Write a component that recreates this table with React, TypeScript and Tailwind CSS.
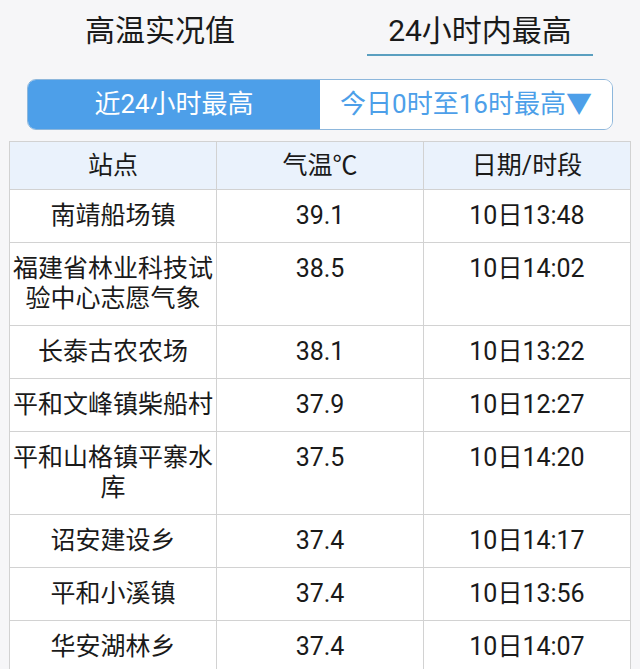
import React from "react";

const rows: [string, string, string][] = [
  ["南靖船场镇", "39.1", "10日13:48"],
  ["福建省林业科技试验中心志愿气象", "38.5", "10日14:02"],
  ["长泰古农农场", "38.1", "10日13:22"],
  ["平和文峰镇柴船村", "37.9", "10日12:27"],
  ["平和山格镇平寨水库", "37.5", "10日14:20"],
  ["诏安建设乡", "37.4", "10日14:17"],
  ["平和小溪镇", "37.4", "10日13:56"],
  ["华安湖林乡", "37.4", "10日14:07"],
];

export default function App() {
  return (
    <div
      className="h-[669px] w-[640px] overflow-hidden bg-[#f6f6f8] text-[#1a1a1a]"
      style={{ fontFamily: "Roboto, 'Noto Sans CJK SC', sans-serif" }}
    >
      <div className="flex h-[64px] items-start">
        <div className="flex w-1/2 justify-center pt-[11px]">
          <span className="text-[30px] leading-[40px]">高温实况值</span>
        </div>
        <div className="flex w-1/2 justify-center pt-[11px]">
          <span className="border-b-2 border-[#5a9fc0] px-[21px] pb-[3px] text-[30px] leading-[40px]">24小时内最高</span>
        </div>
      </div>

      <div className="mx-[27px] mt-[15px] flex h-[51px] overflow-hidden rounded-[9px] border-[1.5px] border-[#8db7dc] text-[26px]">
        <div className="flex w-1/2 items-center justify-center bg-[#4d9fe9] text-white">近24小时最高</div>
        <div className="flex w-1/2 items-center justify-center bg-white text-[#4d9fe9]">今日0时至16时最高▼</div>
      </div>

      <table className="mx-[9px] mt-[11px] w-[622px] table-fixed border-collapse text-[25px] leading-[30px]">
        <thead>
          <tr className="bg-[#eaf2fc]">
            <th className="h-[48px] border border-[#d2d2d2] font-normal">站点</th>
            <th className="h-[48px] border border-[#d2d2d2] font-normal">气温℃</th>
            <th className="h-[48px] border border-[#d2d2d2] font-normal">日期/时段</th>
          </tr>
        </thead>
        <tbody className="bg-white">
          {rows.map(([name, temp, time], i) => (
            <tr key={i}>
              <td className="border border-[#d2d2d2] px-[2px] pt-[11px] pb-[11px] text-center align-top">{name}</td>
              <td className="border border-[#d2d2d2] pt-[11px] pb-[11px] text-center align-top">{temp}</td>
              <td className="border border-[#d2d2d2] pt-[11px] pb-[11px] text-center align-top">{time}</td>
            </tr>
          ))}
        </tbody>
      </table>
    </div>
  );
}
